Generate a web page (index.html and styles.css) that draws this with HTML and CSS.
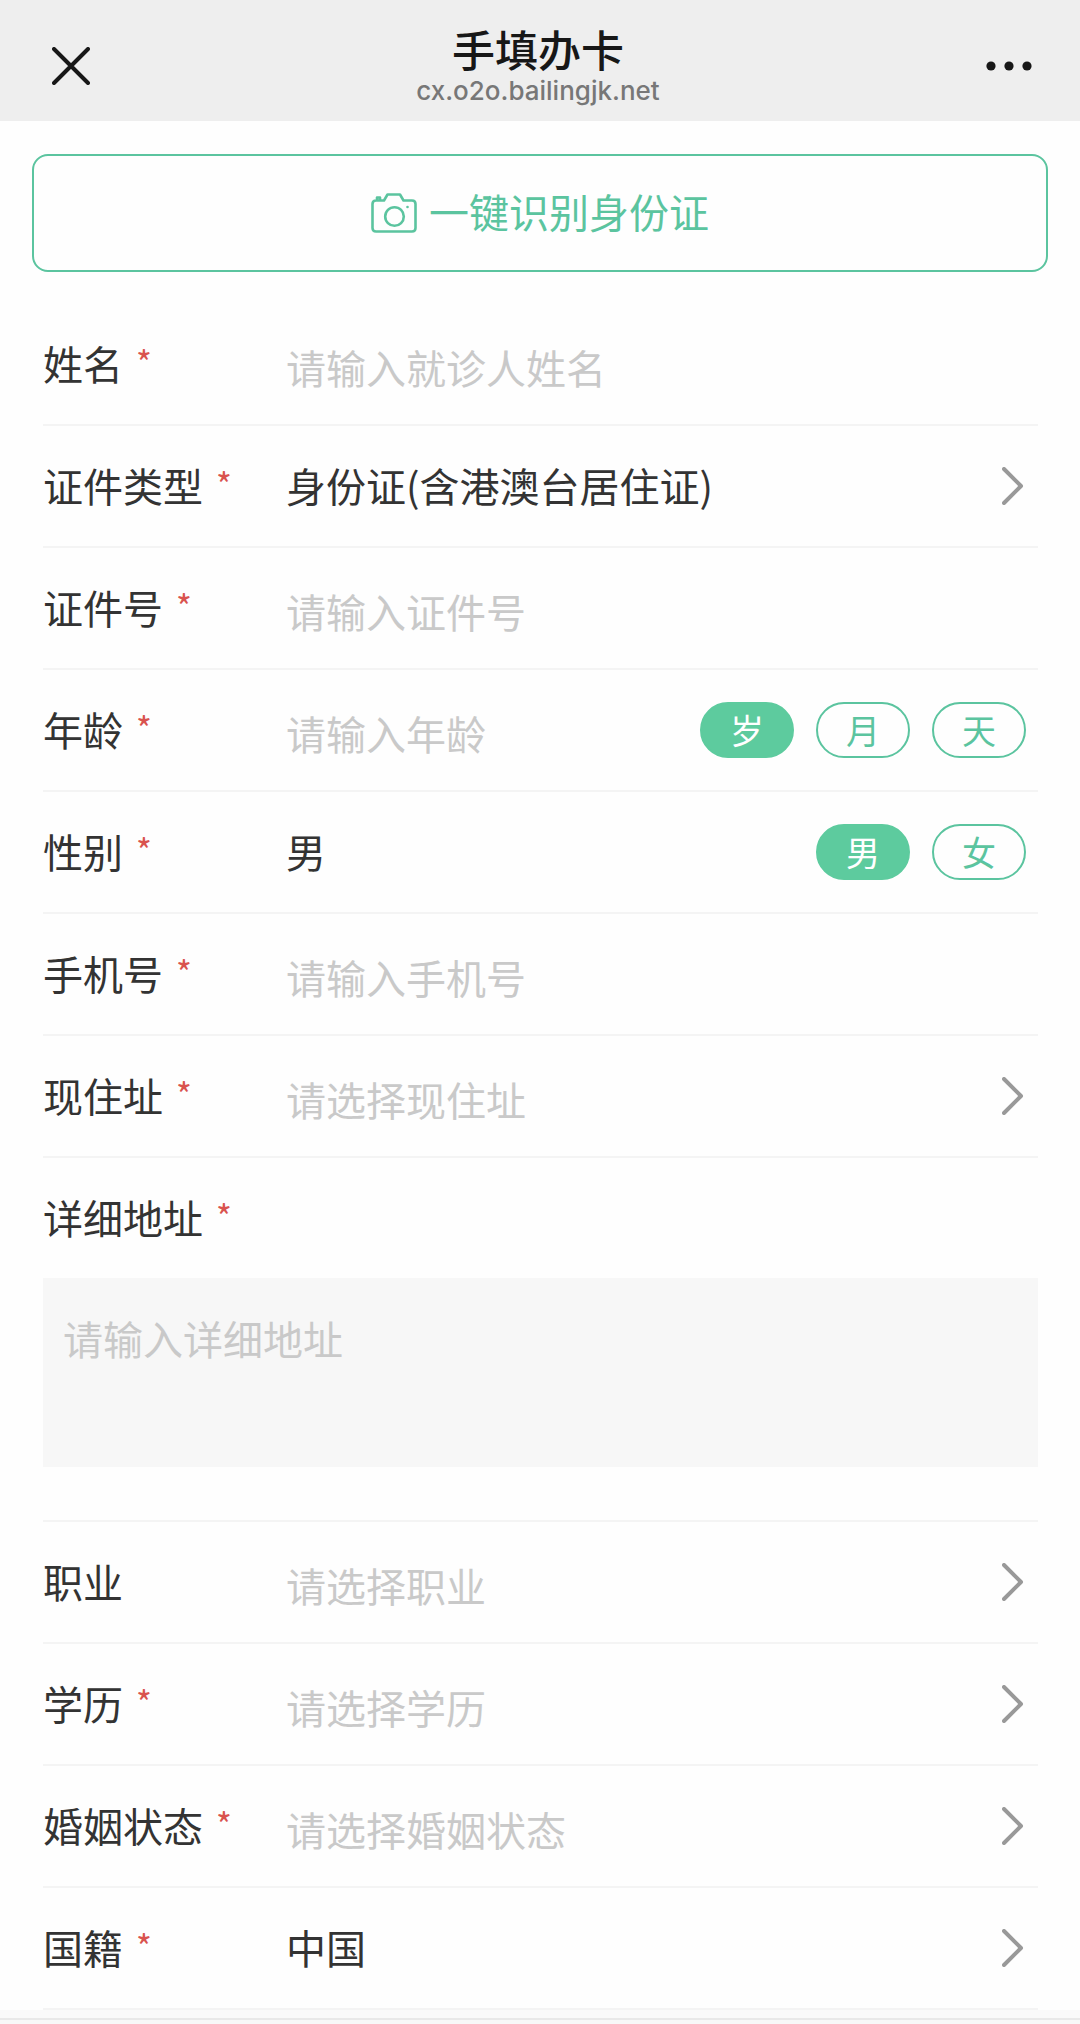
FILE: index.html
```html
<!DOCTYPE html>
<html lang="zh-CN">
<head>
<meta charset="utf-8">
<meta name="viewport" content="width=device-width, initial-scale=1">
<title>手填办卡</title>
<link rel="stylesheet" href="styles.css">
</head>
<body>
<svg class="sprite" aria-hidden="true">
  <symbol id="chevron" viewBox="0 0 22 38"><path d="M2 2 19 19 2 36" fill="none" stroke="currentColor" stroke-width="4" stroke-linecap="round" stroke-linejoin="round"/></symbol>
</svg>
<header class="navbar">
  <button class="nav-button" type="button" aria-label="关闭">
    <svg width="38" height="38" viewBox="0 0 38 38"><path d="M2 2 36 36M36 2 2 36" fill="none" stroke="currentColor" stroke-width="4" stroke-linecap="round"/></svg>
  </button>
  <div class="nav-heading">
    <h1 class="nav-title">手填办卡</h1>
    <p class="nav-host">cx.o2o.bailingjk.net</p>
  </div>
  <button class="nav-button nav-more" type="button" aria-label="更多">
    <svg width="46" height="10" viewBox="0 0 46 10" fill="currentColor"><circle cx="5" cy="5" r="4.6"/><circle cx="23" cy="5" r="4.6"/><circle cx="41" cy="5" r="4.6"/></svg>
  </button>
</header>

<main>
  <form class="card-form">
    <button class="scan-button" type="button">
      <svg width="46" height="40" viewBox="0 0 46 40" fill="none" stroke="currentColor" stroke-width="2.6" stroke-linejoin="round" stroke-linecap="round"><path d="M5 7.5H13L16.5 1.5H29L32.5 7.5H41Q44.5 7.5 44.5 11V35Q44.5 38.5 41 38.5H5Q1.500 38.500 1.500 35V11Q1.500 7.500 5 7.500ZM6 7V4.500H9V7"/><circle cx="23.500" cy="23.500" r="9.300"/><circle cx="36.500" cy="14" r="1.300" fill="currentColor" stroke="none"/></svg>
      <span class="scan-text">一键识别身份证</span>
    </button>

    <div class="fields">
      <div class="row">
        <label class="label required" for="name">姓名</label>
        <input class="control hint" id="name" type="text" placeholder="请输入就诊人姓名">
      </div>
      <div class="row">
        <label class="label required" for="id-type">证件类型</label>
        <select class="control" id="id-type"><option>身份证(含港澳台居住证)</option></select>
        <svg class="chevron"><use href="#chevron"/></svg>
      </div>
      <div class="row">
        <label class="label required" for="id-number">证件号</label>
        <input class="control hint" id="id-number" type="text" placeholder="请输入证件号">
      </div>
      <div class="row">
        <label class="label required" for="age">年龄</label>
        <input class="control hint" id="age" type="text" inputmode="numeric" placeholder="请输入年龄">
        <div class="pills" role="radiogroup" aria-label="年龄单位">
          <label class="pill"><input type="radio" name="unit" checked><span>岁</span></label>
          <label class="pill"><input type="radio" name="unit"><span>月</span></label>
          <label class="pill"><input type="radio" name="unit"><span>天</span></label>
        </div>
      </div>
      <div class="row">
        <label class="label required" for="gender">性别</label>
        <input class="control" id="gender" type="text" value="男" readonly>
        <div class="pills" role="radiogroup" aria-label="性别">
          <label class="pill"><input type="radio" name="sex" checked><span>男</span></label>
          <label class="pill"><input type="radio" name="sex"><span>女</span></label>
        </div>
      </div>
      <div class="row">
        <label class="label required" for="phone">手机号</label>
        <input class="control hint" id="phone" type="tel" placeholder="请输入手机号">
      </div>
      <div class="row">
        <label class="label required" for="region">现住址</label>
        <select class="control hint" id="region"><option>请选择现住址</option></select>
        <svg class="chevron"><use href="#chevron"/></svg>
      </div>
      <div class="block">
        <label class="label required" for="address">详细地址</label>
        <textarea class="address" id="address" placeholder="请输入详细地址"></textarea>
      </div>
      <div class="row">
        <label class="label" for="job">职业</label>
        <select class="control hint" id="job"><option>请选择职业</option></select>
        <svg class="chevron"><use href="#chevron"/></svg>
      </div>
      <div class="row">
        <label class="label required" for="education">学历</label>
        <select class="control hint" id="education"><option>请选择学历</option></select>
        <svg class="chevron"><use href="#chevron"/></svg>
      </div>
      <div class="row">
        <label class="label required" for="marriage">婚姻状态</label>
        <select class="control hint" id="marriage"><option>请选择婚姻状态</option></select>
        <svg class="chevron"><use href="#chevron"/></svg>
      </div>
      <div class="row">
        <label class="label required" for="nation">国籍</label>
        <select class="control" id="nation"><option>中国</option></select>
        <svg class="chevron"><use href="#chevron"/></svg>
      </div>
    </div>
  </form>
</main>
<footer class="bottom-bar"></footer>
</body>
</html>
```
FILE: styles.css
```css
:root {
  --green: #5bc49f;
  --fill: #5dcb9e;
  --ink: #333;
  --hint: #c9c9c9;
  --line: #f4f4f4;
}

* { box-sizing: border-box; }

body {
  margin: 0;
  background: #fefefe;
  color: var(--ink);
  font-family: "Noto Sans CJK SC", sans-serif;
  font-size: 40px;
  line-height: 60px;
}

button, input, select, textarea {
  font: inherit;
  color: inherit;
  margin: 0;
  border: 0;
  background: none;
  border-radius: 0;
  appearance: none;
}

.sprite { position: absolute; width: 0; height: 0; }

.navbar {
  display: flex;
  align-items: center;
  justify-content: space-between;
  padding: 20px 44px 13px 50px;
  background: #eee;
  color: #171717;
}

.nav-button {
  display: flex;
  width: 50px;
  padding: 4px 2px 0;
}

.nav-more { padding: 4px 4px 0 0; }

.nav-heading {
  margin-right: 10px;
  text-align: center;
}

.nav-title {
  margin: 0;
  font-size: 43px;
  font-weight: 500;
  line-height: 56px;
}

.nav-host {
  margin: 0;
  padding-bottom: 2px;
  color: #777;
  font-family: Inter, sans-serif;
  font-size: 26px;
  font-weight: 500;
  line-height: 30px;
}

.card-form { padding: 33px 32px 0; }

.scan-button {
  display: flex;
  align-items: center;
  justify-content: center;
  gap: 12px;
  width: 100%;
  height: 118px;
  border: 2px solid var(--green);
  border-radius: 16px;
  color: var(--green);
}

.scan-text { padding-bottom: 4px; }

.fields { padding: 32px 10px 0 11px; }

.row {
  display: flex;
  align-items: center;
  height: 122px;
  padding-right: 12px;
  border-bottom: 2px solid var(--line);
}

.label {
  flex: none;
  width: 243px;
  padding-bottom: 2px;
}

.required::after {
  content: "*";
  margin-left: 13px;
  color: #d9534f;
  font-size: 34px;
  line-height: 0;
  vertical-align: 4px;
}

.control {
  flex: 1;
  min-width: 0;
  height: 68px;
  padding: 0 0 2px;
}

.hint { padding: 6px 0 0; }

select.hint { color: var(--hint); }

::placeholder { color: var(--hint); opacity: 1; }

.chevron {
  flex: none;
  width: 22px;
  height: 38px;
  margin-right: 2px;
  color: #999;
}

.pills { display: flex; gap: 22px; }

.pill {
  position: relative;
  display: flex;
  font-size: 34px;
  line-height: 52px;
}

.pill input {
  position: absolute;
  inset: 0;
  opacity: 0;
}

.pill span {
  width: 94px;
  border: 2px solid var(--green);
  border-radius: 28px;
  color: var(--green);
  text-align: center;
}

.pill :checked + span {
  border-color: var(--fill);
  background: var(--fill);
  color: #fff;
}

.block {
  display: flex;
  flex-direction: column;
  padding: 29px 0 53px;
  border-bottom: 2px solid var(--line);
}

.address {
  height: 189px;
  margin-top: 29px;
  padding: 30px 20px;
  background: #f7f7f7;
  resize: none;
}

.bottom-bar {
  height: 14px;
  background: #f8f8f8;
  border-top: 8px solid #fafafa;
  box-shadow: inset 0 2px #e9e9e9;
}
```
